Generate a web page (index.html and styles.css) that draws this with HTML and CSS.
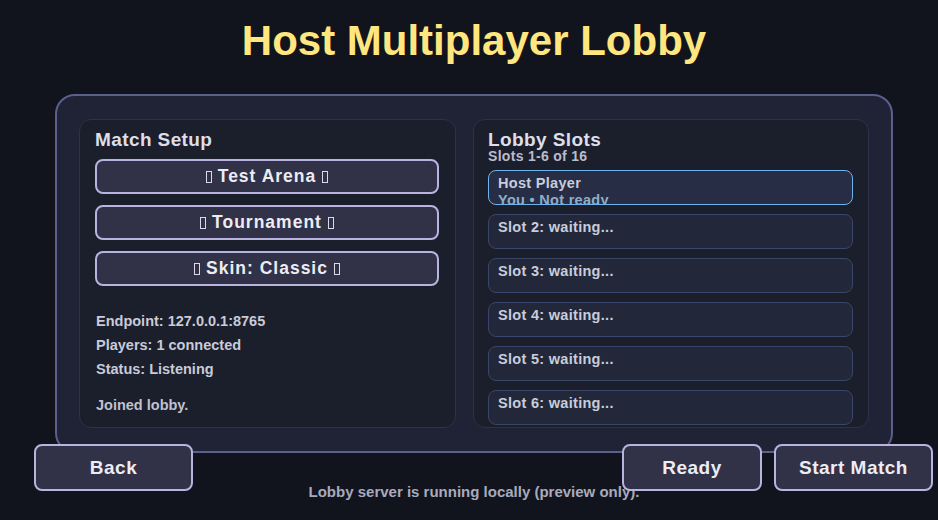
FILE: index.html
```html
<!DOCTYPE html>
<html lang="en">
<head>
<meta charset="utf-8">
<title>Host Multiplayer Lobby</title>
<link rel="stylesheet" href="styles.css">
</head>
<body>
<div class="screen">
  <h1 class="title">Host Multiplayer Lobby</h1>

  <main class="board">
    <section class="panel setup">
      <h2 class="panel-title">Match Setup</h2>
      <div class="choices">
        <button class="choice"><span class="tofu"></span> Test Arena <span class="tofu"></span></button>
        <button class="choice"><span class="tofu"></span> Tournament <span class="tofu"></span></button>
        <button class="choice"><span class="tofu"></span> Skin: Classic <span class="tofu"></span></button>
      </div>
      <div class="info">
        <p>Endpoint: 127.0.0.1:8765</p>
        <p>Players: 1 connected</p>
        <p>Status: Listening</p>
      </div>
      <p class="log">Joined lobby.</p>
    </section>

    <section class="panel slots">
      <h2 class="panel-title slim">Lobby Slots</h2>
      <p class="subtitle">Slots 1-6 of 16</p>
      <ul class="slot-list">
        <li class="slot host">
          <span class="slot-name">Host Player</span>
          <span class="slot-state">You • Not ready</span>
        </li>
        <li class="slot"><span class="slot-name">Slot 2: waiting...</span></li>
        <li class="slot"><span class="slot-name">Slot 3: waiting...</span></li>
        <li class="slot"><span class="slot-name">Slot 4: waiting...</span></li>
        <li class="slot"><span class="slot-name">Slot 5: waiting...</span></li>
        <li class="slot"><span class="slot-name">Slot 6: waiting...</span></li>
      </ul>
    </section>
  </main>

  <footer class="bottom">
    <p class="note">Lobby server is running locally (preview only).</p>
    <div class="actions">
      <button class="action back">Back</button>
      <button class="action ready">Ready</button>
      <button class="action start">Start Match</button>
    </div>
  </footer>
</div>
</body>
</html>
```

FILE: styles.css
```css
* {
  box-sizing: border-box;
}

html,
body {
  margin: 0;
  padding: 0;
}

body {
  width: 938px;
  height: 520px;
  overflow: hidden;
  background: #11141d;
  font-family: "Liberation Sans", Arial, sans-serif;
  font-weight: 700;
  color: #dcdde8;
}

.screen {
  display: flex;
  flex-direction: column;
}

.title {
  margin: 0 45px 0 55px;
  padding-top: 17px;
  height: 64px;
  line-height: 48px;
  font-size: 42px;
  text-align: center;
  color: #ffe67f;
}

/* outer card holding both columns */
.board {
  margin: 30px 45px 0 55px;
  height: 359px;
  padding: 23px 22px;
  border: 2px solid #5a5f8c;
  border-radius: 20px;
  background: #1f2335;
  display: grid;
  grid-template-columns: 377px 1fr;
  column-gap: 17px;
}

.panel {
  border: 1px solid #2d3246;
  border-radius: 12px;
  background: #1b1e2b;
  min-height: 0;
  overflow: hidden;
}

.setup {
  padding: 9px 16px 0 15px;
}

.slots {
  padding: 10px 15px 0 14px;
}

.panel-title {
  margin: 0;
  font-size: 19px;
  line-height: 22px;
  letter-spacing: 0.4px;
  color: #dddeea;
}

.panel-title.slim {
  line-height: 19px;
}

.subtitle {
  margin: 0;
  font-size: 14px;
  line-height: 15px;
  letter-spacing: 0.3px;
  color: #b9bccd;
}

/* selector buttons */
.choices {
  margin-top: 8px;
  display: flex;
  flex-direction: column;
  gap: 11px;
}

.choice {
  height: 35px;
  width: 100%;
  padding: 0;
  border: 2px solid #b8b4df;
  border-radius: 8px;
  background: #313147;
  color: #ececf4;
  font-family: inherit;
  font-weight: 700;
  font-size: 17.5px;
  letter-spacing: 1px;
  display: flex;
  align-items: center;
  justify-content: center;
  white-space: pre;
}

/* missing-glyph boxes either side of the option label */
.tofu {
  display: inline-block;
  width: 6px;
  height: 12px;
  border: 1px solid #dadaea;
  margin-top: 1px;
}

.info {
  margin-top: 23px;
}

.info p,
.log {
  margin: 0;
  font-size: 14.5px;
  line-height: 24px;
  color: #c9cbd9;
  padding-left: 1px;
}

.log {
  margin-top: 12px;
  color: #bfc1d0;
}

/* lobby slots */
.slot-list {
  list-style: none;
  margin: 6px 0 0;
  padding: 0;
  display: flex;
  flex-direction: column;
  gap: 9px;
}

.slot {
  height: 35px;
  border: 1px solid #3a4669;
  border-radius: 8px;
  background: #222839;
  padding: 4px 9px 0;
  overflow: hidden;
  display: flex;
  flex-direction: column;
}

.slot.host {
  border-color: #6db4ee;
  background: #262d44;
}

.slot-name {
  font-size: 14.5px;
  line-height: 17px;
  color: #c9ccdc;
  letter-spacing: 0.3px;
}

.slot-state {
  font-size: 14.5px;
  line-height: 17px;
  color: #8eaec6;
  letter-spacing: 0.3px;
  white-space: nowrap;
}

/* bottom bar: hint text and buttons share one grid cell */
.bottom {
  margin-top: -9px;
  display: grid;
  height: 47px;
}

.bottom > * {
  grid-area: 1 / 1;
}

.note {
  margin: 0 45px 0 55px;
  padding-top: 39px;
  text-align: center;
  font-size: 15px;
  line-height: 17px;
  color: #a8aabd;
}

.actions {
  display: flex;
  gap: 12px;
  padding: 0 5px 0 34px;
  position: relative;
}

.action {
  height: 47px;
  padding: 0;
  border: 2px solid #b8b4df;
  border-radius: 8px;
  background: #313147;
  color: #ececf4;
  font-family: inherit;
  font-weight: 700;
  font-size: 19px;
  letter-spacing: 0.5px;
}

.back {
  width: 159px;
  margin-right: auto;
}

.ready {
  width: 140px;
}

.start {
  width: 159px;
}
```
